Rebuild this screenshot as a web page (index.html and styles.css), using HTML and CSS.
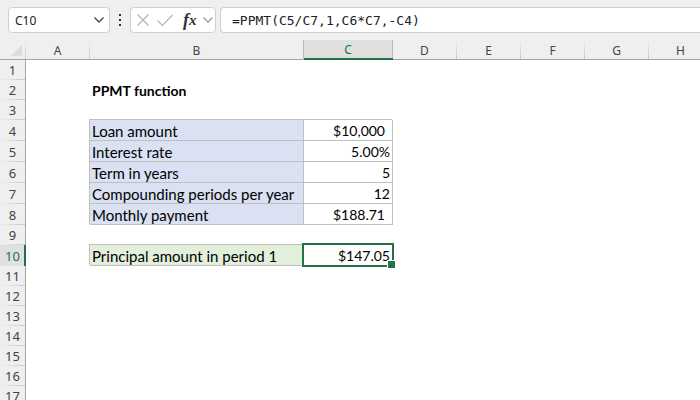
FILE: index.html
```html
<!DOCTYPE html>
<html lang="en">
<head>
    <meta charset="UTF-8">
    <meta name="viewport" content="width=device-width, initial-scale=1.0">
    <title>PPMT function</title>
    <link rel="stylesheet" href="styles.css">
</head>
<body>
    <div class="formula-bar">
        <div class="name-box">
            <input class="name-input" type="text" value="C10" aria-label="Name box">
            <button class="icon-btn" type="button" aria-label="Open name list">
                <svg width="12" height="8" viewBox="0 0 12 8"><path d="M1.5 1.5 6 6l4.5-4.5" fill="none" stroke="#444" stroke-width="1.3"/></svg>
            </button>
        </div>
        <svg class="grip" width="4" height="14" viewBox="0 0 4 14"><path d="M1 1h2v2H1zM1 6h2v2H1zM1 11h2v2H1z" fill="#333"/></svg>
        <div class="actions">
            <button class="icon-btn" type="button" aria-label="Cancel">
                <svg width="14" height="14" viewBox="0 0 14 14"><path d="M1.5 1.5l11 11M12.5 1.5l-11 11" fill="none" stroke="#b4b4b4" stroke-width="1.2"/></svg>
            </button>
            <button class="icon-btn" type="button" aria-label="Enter">
                <svg width="18" height="14" viewBox="0 0 18 14"><path d="M1.5 7.5l5 5 10-10.5" fill="none" stroke="#b4b4b4" stroke-width="1.2"/></svg>
            </button>
            <button class="icon-btn fx" type="button" aria-label="Insert function"><span class="fx-f">f</span>x</button>
            <button class="icon-btn" type="button" aria-label="Recent functions">
                <svg width="12" height="8" viewBox="0 0 12 8"><path d="M1.5 1.5 6 6l4.5-4.5" fill="none" stroke="#999" stroke-width="1.3"/></svg>
            </button>
        </div>
        <input class="formula-input" type="text" value="=PPMT(C5/C7,1,C6*C7,-C4)" aria-label="Formula bar">
    </div>

    <div class="sheet">
        <table class="grid">
            <colgroup>
                <col class="col-num">
                <col class="col-std">
                <col class="col-label">
                <col class="col-value">
                <col class="col-std" span="5">
            </colgroup>
            <thead>
                <tr>
                    <th class="corner"><svg width="11" height="11" viewBox="0 0 11 11"><path d="M11 0v11H0z" fill="#dcdcdc"/></svg></th>
                    <th scope="col">A</th>
                    <th scope="col">B</th>
                    <th scope="col" class="active">C</th>
                    <th scope="col">D</th>
                    <th scope="col">E</th>
                    <th scope="col">F</th>
                    <th scope="col">G</th>
                    <th scope="col">H</th>
                </tr>
            </thead>
            <tbody>
                <tr><th scope="row">1</th><td colspan="8"></td></tr>
                <tr><th scope="row">2</th><td></td><td class="title">PPMT function</td><td colspan="6"></td></tr>
                <tr><th scope="row">3</th><td colspan="8"></td></tr>
                <tr class="tall"><th scope="row">4</th><td></td><td class="boxed input-label">Loan amount</td><td class="boxed value currency">$10,000</td><td colspan="5"></td></tr>
                <tr class="tall"><th scope="row">5</th><td></td><td class="boxed input-label">Interest rate</td><td class="boxed value">5.00%</td><td colspan="5"></td></tr>
                <tr class="tall"><th scope="row">6</th><td></td><td class="boxed input-label">Term in years</td><td class="boxed value">5</td><td colspan="5"></td></tr>
                <tr class="tall"><th scope="row">7</th><td></td><td class="boxed input-label">Compounding periods per year</td><td class="boxed value">12</td><td colspan="5"></td></tr>
                <tr class="tall"><th scope="row">8</th><td></td><td class="boxed input-label">Monthly payment</td><td class="boxed value currency">$188.71</td><td colspan="5"></td></tr>
                <tr><th scope="row">9</th><td colspan="8"></td></tr>
                <tr class="tall"><th scope="row" class="active">10</th><td></td><td class="boxed result-label">Principal amount in period 1</td><td class="boxed value selected">$147.05</td><td colspan="5"></td></tr>
                <tr><th scope="row">11</th><td colspan="8"></td></tr>
                <tr><th scope="row">12</th><td colspan="8"></td></tr>
                <tr><th scope="row">13</th><td colspan="8"></td></tr>
                <tr><th scope="row">14</th><td colspan="8"></td></tr>
                <tr><th scope="row">15</th><td colspan="8"></td></tr>
                <tr><th scope="row">16</th><td colspan="8"></td></tr>
                <tr><th scope="row">17</th><td colspan="8"></td></tr>
            </tbody>
        </table>
    </div>
</body>
</html>
```
FILE: styles.css
```css
* {
    box-sizing: border-box;
}

body {
    display: flex;
    flex-direction: column;
    height: 100vh;
    margin: 0;
    overflow: hidden;
    background: #fff;
    color: #000;
    font-family: Lato, "Noto Sans", sans-serif;
    font-size: 14px;
}

svg {
    display: block;
}

/* formula bar */
.formula-bar {
    display: flex;
    flex: none;
    align-items: center;
    height: 40px;
    padding-left: 8px;
    background: #efefef;
}

.name-box,
.actions,
.formula-input {
    height: 26px;
    border: 1px solid #d0d0d0;
    border-radius: 4px;
    background: #fff;
}

.name-box {
    display: flex;
    align-items: center;
    width: 102px;
    padding: 0 4px 0 6px;
}

.name-input {
    flex: 1;
    min-width: 0;
    padding: 0;
    border: 0;
    outline: 0;
    background: none;
    color: #222;
    font-family: "Noto Sans", sans-serif;
    font-size: 12px;
}

.icon-btn {
    display: flex;
    align-items: center;
    padding: 0;
    border: 0;
    background: none;
}

.grip {
    margin: 0 8px;
}

.actions {
    display: flex;
    align-items: center;
    justify-content: space-between;
    width: 86px;
    margin-right: 4px;
    padding: 0 1px 0 5px;
}

.fx {
    padding-left: 4px;
    color: #333;
    font: italic bold 15px/20px "Liberation Serif", serif;
}

.fx-f {
    font-size: 18px;
}

.formula-input {
    flex: 1;
    min-width: 0;
    padding: 0 11px;
    border-right: 0;
    border-radius: 4px 0 0 4px;
    outline: 0;
    color: #222;
    font-family: "DejaVu Sans Mono", monospace;
    font-size: 13px;
}

/* sheet */
.sheet {
    flex: 1;
    min-height: 0;
    overflow: hidden;
}

.grid {
    width: 713px;
    border-spacing: 0;
    table-layout: fixed;
}

.col-num {
    width: 26px;
}

.col-std {
    width: 64px;
}

.col-label {
    width: 214px;
}

.col-value {
    width: 89px;
}

.grid th,
.grid td {
    height: 20px;
    padding: 0;
    line-height: 19px;
    white-space: nowrap;
}

.grid .tall th,
.grid .tall td {
    height: 21px;
    line-height: 20px;
}

.grid th {
    background: #efefef;
    color: #444;
    font-family: "Noto Sans", sans-serif;
    font-size: 12px;
    font-weight: normal;
}

.grid thead th {
    padding: 2px 1px 0 0;
    border-bottom: 1px solid #a6a6a6;
    background: linear-gradient(#efefef, #c8c8c8) right / 1px 100% no-repeat #efefef;
    line-height: 16px;
}

.grid tbody th {
    border-right: 1px solid #a6a6a6;
    background: linear-gradient(to right, #efefef, #c8c8c8) bottom / 100% 1px no-repeat #efefef;
    font-size: 13px;
}

.grid thead .corner {
    padding: 0;
    vertical-align: bottom;
}

.corner svg {
    margin: 0 0 3px 11px;
}

.grid thead .active {
    border-bottom: 2px solid #217346;
    background: #e0e0e0;
    box-shadow: -1px 0 0 #b8b8b8, inset -1px 0 0 #b8b8b8;
    color: #217346;
}

.grid tbody .active {
    padding-left: 1px;
    border-right: 2px solid #217346;
    background: #e0e0e0;
    color: #217346;
}

.grid .title {
    padding-left: 2px;
    font-weight: bold;
}

.grid .tall .boxed {
    padding: 2px 2px 0;
    border-right: 1px solid #bfbfbf;
    border-bottom: 1px solid #bfbfbf;
    box-shadow: -1px -1px 0 #bfbfbf;
    line-height: 18px;
}

.input-label,
.result-label {
    font-size: 15px;
}

.input-label {
    background: #d9e1f2;
}

.result-label {
    background: #e2efda;
}

.grid .value {
    text-align: right;
}

.grid .tall .currency {
    padding-right: 7px;
}

.selected {
    position: relative;
}

/* selection frame and fill handle lie over the cell edges */
.selected::before {
    content: "";
    position: absolute;
    inset: -2px;
    border: 2px solid #217346;
}

.selected::after {
    content: "";
    position: absolute;
    right: -4px;
    bottom: -4px;
    width: 7px;
    height: 7px;
    border: 1px solid #fff;
    background: #217346;
}
```
